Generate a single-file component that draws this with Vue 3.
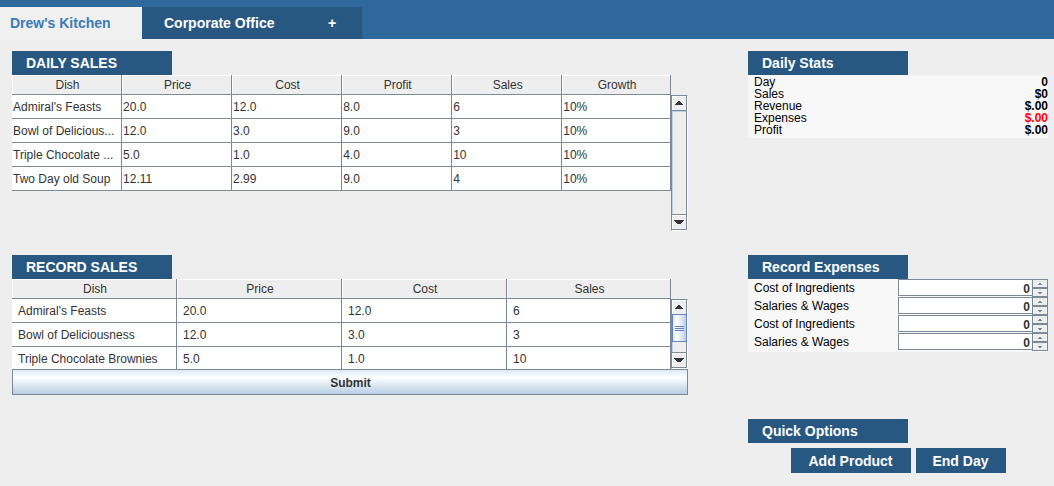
<script setup>
import { ref } from 'vue'

const tabs = ["Drew's Kitchen", 'Corporate Office', '+']
const active = ref(0)

const dailyColumns = ['Dish', 'Price', 'Cost', 'Profit', 'Sales', 'Growth']
const dailyRows = [
  ["Admiral's Feasts", '20.0', '12.0', '8.0', '6', '10%'],
  ['Bowl of Delicious...', '12.0', '3.0', '9.0', '3', '10%'],
  ['Triple Chocolate ...', '5.0', '1.0', '4.0', '10', '10%'],
  ['Two Day old Soup', '12.11', '2.99', '9.0', '4', '10%'],
]

const recordColumns = ['Dish', 'Price', 'Cost', 'Sales']
const recordRows = [
  ["Admiral's Feasts", '20.0', '12.0', '6'],
  ['Bowl of Deliciousness', '12.0', '3.0', '3'],
  ['Triple Chocolate Brownies', '5.0', '1.0', '10'],
]

const stats = [
  { label: 'Day', value: '0' },
  { label: 'Sales', value: '$0' },
  { label: 'Revenue', value: '$.00' },
  { label: 'Expenses', value: '$.00', negative: true },
  { label: 'Profit', value: '$.00' },
]

const expenses = ref([
  { label: 'Cost of Ingredients', value: 0 },
  { label: 'Salaries & Wages', value: 0 },
  { label: 'Cost of Ingredients', value: 0 },
  { label: 'Salaries & Wages', value: 0 },
])
</script>

<template>
  <div class="app">
    <nav class="tabs">
      <button
        v-for="(tab, i) in tabs"
        :key="tab"
        type="button"
        class="tab"
        :class="{ active: i === active, add: tab === '+' }"
        @click="active = i"
      >{{ tab }}</button>
    </nav>

    <main class="board">
      <section>
        <h2 class="title">DAILY SALES</h2>
        <div class="scroll-pane daily">
          <div class="viewport">
            <table class="grid">
              <thead>
                <tr><th v-for="c in dailyColumns" :key="c" scope="col">{{ c }}</th></tr>
              </thead>
              <tbody>
                <tr v-for="row in dailyRows" :key="row[0]">
                  <td v-for="(cell, i) in row" :key="i">{{ cell }}</td>
                </tr>
              </tbody>
            </table>
          </div>
          <div class="scrollbar">
            <div class="scroll-inner">
              <button type="button" class="arrow up" aria-label="Scroll up">
                <svg width="8" height="4" viewBox="0 0 8 4" shape-rendering="crispEdges"><path d="M3 0h2v1h1v1h1v1h1v1H0V3h1V2h1V1h1z" /></svg>
              </button>
              <div class="track"></div>
              <button type="button" class="arrow down" aria-label="Scroll down">
                <svg width="10" height="4" viewBox="0 0 10 4" shape-rendering="crispEdges"><path d="M0 0h10v1H9v1H8v1H7v1H3V3H2V2H1V1H0z" /></svg>
              </button>
            </div>
          </div>
        </div>
      </section>

      <section>
        <h2 class="title">Daily Stats</h2>
        <dl class="stats">
          <div v-for="s in stats" :key="s.label" class="stat">
            <dt>{{ s.label }}</dt>
            <dd :class="{ negative: s.negative }">{{ s.value }}</dd>
          </div>
        </dl>
      </section>

      <section>
        <h2 class="title">RECORD SALES</h2>
        <div class="scroll-pane record">
          <div class="viewport">
            <table class="grid">
              <thead>
                <tr><th v-for="c in recordColumns" :key="c" scope="col">{{ c }}</th></tr>
              </thead>
              <tbody>
                <tr v-for="row in recordRows" :key="row[0]">
                  <td v-for="(cell, i) in row" :key="i">{{ cell }}</td>
                </tr>
              </tbody>
            </table>
          </div>
          <div class="scrollbar">
            <div class="scroll-inner">
              <button type="button" class="arrow up" aria-label="Scroll up">
                <svg width="8" height="4" viewBox="0 0 8 4" shape-rendering="crispEdges"><path d="M3 0h2v1h1v1h1v1h1v1H0V3h1V2h1V1h1z" /></svg>
              </button>
              <div class="track"><div class="thumb"><i></i><i></i><i></i></div></div>
              <button type="button" class="arrow down" aria-label="Scroll down">
                <svg width="10" height="4" viewBox="0 0 10 4" shape-rendering="crispEdges"><path d="M0 0h10v1H9v1H8v1H7v1H3V3H2V2H1V1H0z" /></svg>
              </button>
            </div>
          </div>
        </div>
        <button type="button" class="submit">Submit</button>
      </section>

      <section>
        <h2 class="title">Record Expenses</h2>
        <div class="expenses">
          <div v-for="(e, i) in expenses" :key="i" class="expense">
            <label :for="'expense-' + i">{{ e.label }}</label>
            <input :id="'expense-' + i" v-model.number="e.value" type="text" inputmode="numeric" />
            <span class="spin">
              <button type="button" aria-label="Increase" @click="e.value++">
                <svg width="4" height="2" viewBox="0 0 4 2" shape-rendering="crispEdges"><path d="M1 0h2v1h1v1H0V1h1z" /></svg>
              </button>
              <button type="button" aria-label="Decrease" @click="e.value--">
                <svg width="4" height="2" viewBox="0 0 4 2" shape-rendering="crispEdges"><path d="M0 0h4v1H3v1H1V1H0z" /></svg>
              </button>
            </span>
          </div>
        </div>
      </section>

      <section class="quick">
        <h2 class="title">Quick Options</h2>
        <div class="actions">
          <button type="button" class="action wide">Add Product</button>
          <button type="button" class="action">End Day</button>
        </div>
      </section>
    </main>
  </div>
</template>

<style>
body {
  background: #eeeeee;
}
</style>

<style scoped>
.app {
  font-family: "Liberation Sans", Arial, sans-serif;
  font-size: 12px;
  color: #333333;
}

button,
input {
  font: inherit;
  color: inherit;
  margin: 0;
  padding: 0;
  border: 0;
  border-radius: 0;
  box-sizing: border-box;
}

.tabs {
  display: flex;
  padding-top: 7px;
  background: #2f699b;
}

.tab {
  height: 32px;
  padding: 0 22px;
  background: #285882;
  color: #ffffff;
  font-size: 14px;
  font-weight: bold;
  text-align: left;
  min-width: 160px;
}

.tab.active {
  min-width: 142px;
  padding: 0 10px;
  background: #f0f0f0;
  color: #3a7ab8;
}

.tab.add {
  min-width: 60px;
  text-align: center;
}

.board {
  display: grid;
  grid-template-columns: minmax(0, 1fr) 300px;
  column-gap: 60px;
  row-gap: 24px;
  padding: 12px 6px 12px 12px;
}

.title {
  width: 160px;
  box-sizing: border-box;
  margin: 0;
  padding-left: 14px;
  background: #285882;
  color: #ffffff;
  font-size: 14px;
  line-height: 24px;
}

.scroll-pane {
  display: flex;
}

.daily {
  height: 156px;
}

.record {
  height: 90px;
}

.viewport {
  flex: 1;
  min-width: 0;
  overflow: hidden;
}

.grid {
  width: 100%;
  table-layout: fixed;
  border-collapse: separate;
  border-spacing: 0;
}

.grid th,
.grid td {
  box-sizing: border-box;
  border-right: 1px solid #7a8a99;
  border-bottom: 1px solid #7a8a99;
  white-space: nowrap;
  overflow: hidden;
}

.grid th {
  height: 20px;
  padding: 2px 0 0 2px;
  background: #eeeeee;
  box-shadow: inset 1px 1px #ffffff;
  font-weight: normal;
  line-height: 17px;
}

.daily th:not(:last-child) {
  width: 16.7%;
}

.record th:not(:last-child) {
  width: 25.04%;
}

.grid td {
  height: 24px;
  padding: 2px 0 0 1px;
  background: #ffffff;
  line-height: 21px;
}

.record .grid td {
  padding-left: 6px;
}

.scrollbar {
  display: flex;
  width: 17px;
  box-sizing: border-box;
  margin-top: 20px;
  border: 1px solid #ffffff;
  border-top-color: #7a8a99;
  border-left-color: #7a8a99;
}

.scroll-inner {
  flex: 1;
  display: flex;
  flex-direction: column;
  border-right: 1px solid #7a8a99;
  border-bottom: 1px solid #7a8a99;
}

.arrow {
  display: flex;
  align-items: center;
  justify-content: center;
  height: 15px;
  background: #eeeeee;
  box-shadow: inset 1px 1px #ffffff;
  fill: #333333;
}

.arrow.up {
  border-bottom: 1px solid #7a8a99;
}

.arrow.down {
  border-top: 1px solid #7a8a99;
}

.track {
  flex: 1;
  box-shadow: inset 1px 1px #b8cfe5;
}

.thumb {
  display: flex;
  flex-direction: column;
  align-items: center;
  justify-content: center;
  gap: 1px;
  height: 28px;
  box-sizing: border-box;
  margin: -1px -1px 0 0;
  border: 1px solid #6382bf;
  background: linear-gradient(to right, #dde8f3, #ffffff 30%, #b8cfe5);
}

.thumb i {
  width: 9px;
  height: 1px;
  background: #6382bf;
}

.submit {
  display: block;
  width: 100%;
  height: 26px;
  padding: 2px 0 0 1px;
  border: 1px solid #7a8a99;
  background: linear-gradient(#dde8f3, #ffffff 30%, #b8cfe5);
  font-weight: bold;
}

.stats {
  margin: 0;
  padding: 1px 0 2px 6px;
  background: #f8f8f8;
  color: #000000;
  line-height: 12px;
}

.stat {
  display: flex;
  justify-content: space-between;
}

.stat dd {
  margin: 0;
  font-weight: bold;
}

.stat .negative {
  color: #ff0000;
}

.expenses {
  padding-bottom: 1px;
  background: #f8f8f8;
  color: #000000;
}

.expense {
  display: flex;
  height: 18px;
}

.expense label {
  width: 144px;
  padding-left: 6px;
  line-height: 19px;
}

.expense input {
  flex: 1;
  min-width: 0;
  height: 17px;
  padding: 2px 2px 0 0;
  border: 1px solid #7a8a99;
  border-right: 0;
  background: #ffffff;
  color: #333333;
  font-weight: bold;
  text-align: right;
}

.spin {
  display: flex;
  flex-direction: column;
  width: 16px;
}

.spin button {
  display: flex;
  align-items: center;
  justify-content: center;
  height: 9px;
  border: 1px solid #7a8a99;
  background: #eeeeee;
  fill: #7a8a99;
}

.quick {
  grid-column: 2;
}

.actions {
  display: flex;
  justify-content: center;
  gap: 5px;
  margin-top: 5px;
}

.action {
  height: 25px;
  min-width: 90px;
  padding: 0 16px;
  background: #285882;
  color: #ffffff;
  font-size: 14px;
  font-weight: bold;
}

.action.wide {
  min-width: 120px;
}
</style>
